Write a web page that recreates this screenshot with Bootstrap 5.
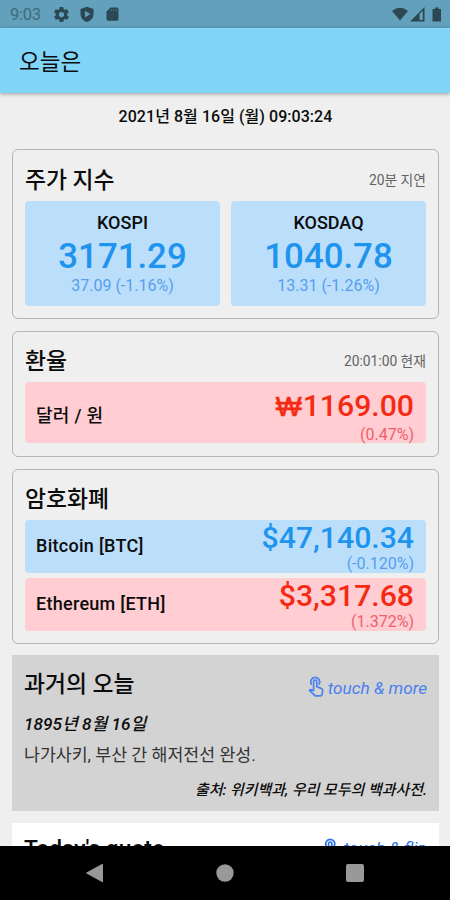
<!DOCTYPE html>
<html lang="ko">
<head>
<meta charset="utf-8">
<meta name="viewport" content="width=device-width, initial-scale=1">
<title>오늘은</title>
<link href="https://cdn.jsdelivr.net/npm/bootstrap@5.3.0/dist/css/bootstrap.min.css" rel="stylesheet">
<style>
  body { font-family: Roboto, "Noto Sans CJK KR", sans-serif; background: #efefef; color: #0c0c0c; }
  .screen { width: 450px; height: 900px; }
  .status-bar { height: 28px; background: #62a0bb; color: #2b4753; font-size: 16.5px; line-height: 28px; padding: 1px 8px 0 10px; }
  .clock { width: 44px; color: #3f6a7c; letter-spacing: -.3px; }
  .app-bar { height: 65px; background: #80d5f9; padding: 4px 19px 0; font-size: 22.5px; box-shadow: 0 1px 4px rgba(0,0,0,.35); z-index: 1; }
  .content { padding: 0 11px 0 12px; }
  .stamp { height: 56px; font-size: 16px; line-height: 47px; font-weight: 500; letter-spacing: .05px; }
  .panel { border: 1.5px solid #b5b5b5; border-radius: 6px; padding: 0 12px; margin-bottom: 12px; }
  .panel-stock { height: 170px; }
  .panel-rate { height: 126px; }
  .panel-coin { height: 175px; margin-bottom: 11px; }
  .panel-head { height: 51px; padding-top: 9px; }
  .panel-head-sm { height: 50px; padding-top: 8px; }
  .title { font-size: 22.8px; line-height: 44px; font-weight: 500; }
  .note { font-size: 13.8px; line-height: 42px; color: #626262; }
  .tile { border-radius: 4px; }
  .tile-down { background: #bbdefb; }
  .tile-up { background: #ffcdd2; }
  .down { color: #1e94ee; }
  .up { color: #f52a12; }
  .sub-down { color: #559fed; }
  .sub-up { color: #f0606a; }
  .stocks { gap: 11px; }
  .stock { height: 105px; padding-top: 10px; }
  .name { font-size: 18px; line-height: 24px; font-weight: 500; }
  .pair { letter-spacing: .28px; }
  .big { font-size: 34.8px; line-height: 43px; font-weight: 500; }
  .price { font-size: 30.2px; line-height: 36px; font-weight: 500; }
  .won { font-family: "Liberation Sans", sans-serif; font-size: 27.5px; line-height: 1; -webkit-text-stroke: .7px currentColor; margin-right: 1px; }
  .delta { font-size: 16px; line-height: 16px; }
  .tile-row { padding: 0 12px 0 11px; }
  .row-rate { height: 61px; padding-top: 6px; }
  .row-rate .delta { line-height: 22px; }
  .row-coin { height: 53px; }
  .row-coin .price { line-height: 35px; }
  .row-coin .delta { line-height: 18px; }
  .row-coin .pair { padding-bottom: 1px; }
  .row-coin + .row-coin { margin-top: 5px; }
  .history { height: 156px; background: #d3d3d3; padding: 8px 12px 0; margin-bottom: 12px; }
  .quote { height: 90px; background: #fff; padding: 4px 12px 0; }
  .hist-date { font-size: 17.2px; line-height: 24px; font-weight: 500; margin-top: 3px; }
  .hist-text { font-size: 17.3px; line-height: 24px; color: #333; margin-top: 7px; }
  .source { font-size: 14.95px; line-height: 20px; font-weight: 500; margin-top: 13px; }
  .touch { font-size: 17.2px; line-height: 42px; color: #4a80f0; padding-top: 4px; }
  .touch-flip { line-height: 28px; padding-top: 7px; color: #2f73ea; }
  .nav-keys { height: 54px; padding: 0 86px 0 85px; background: #000; }
</style>
<script src="https://cdn.jsdelivr.net/npm/bootstrap@5.3.0/dist/js/bootstrap.bundle.min.js"></script>
</head>
<body>
<svg class="d-none">
  <symbol id="tap" viewBox="0 0 16 21">
    <g fill="none" stroke="currentColor" stroke-width="1.7" stroke-linejoin="round" stroke-linecap="round">
      <path d="M3.400 8.200A4.500 4.500 0 1 1 11.200 8"/>
      <path d="M5.600 14.600V5.600a1.600 1.600 0 0 1 3.200 0v5l4.600 1.900q1.500.7 1.300 2.200l-.6 3.600q-.3 1.500-1.800 1.500H7.200L1.400 14.400l1-.8z"/>
    </g>
  </symbol>
</svg>
<div class="screen d-flex flex-column overflow-hidden">
  <div class="status-bar d-flex align-items-center flex-shrink-0">
    <span class="clock">9:03</span>
    <div class="d-flex align-items-center flex-grow-1">
      <svg width="15" height="15" viewBox="2 2 20 20" fill="currentColor"><path fill-rule="evenodd" d="M19.400 13a7.500 7.500 0 0 0 0-2l2.100-1.600a.5.5 0 0 0 .1-.6l-2-3.500a.5.5 0 0 0-.6-.2l-2.500 1a7 7 0 0 0-1.700-1l-.4-2.600a.5.5 0 0 0-.5-.5h-4a.5.5 0 0 0-.5.5L9 5.100a7 7 0 0 0-1.700 1l-2.500-1a.5.5 0 0 0-.6.2l-2 3.500a.5.5 0 0 0 .1.600L4.500 11a7.500 7.500 0 0 0 0 2l-2.100 1.600a.5.5 0 0 0-.1.600l2 3.500c.1.200.4.300.6.200l2.500-1a7 7 0 0 0 1.700 1l.4 2.600c0 .3.200.5.500.5h4c.3 0 .5-.2.500-.5l.4-2.600a7 7 0 0 0 1.700-1l2.500 1c.2.100.5 0 .6-.2l2-3.500a.5.5 0 0 0-.1-.6zM12 15.500a3.500 3.500 0 1 1 0-7 3.500 3.500 0 0 1 0 7z"/></svg>
      <svg class="ms-2" width="19" height="17" viewBox="0 0 19 17" fill="currentColor"><path fill-rule="evenodd" d="M10 .8l6.500 2.300v4.700c0 4-2.600 7-6.500 8.300C6.100 14.800 3.500 11.800 3.500 7.800V3.100zM8 4.800v6.600l5.300-3.300z"/></svg>
      <svg class="ms-2" width="19" height="17" viewBox="0 0 19 17" fill="currentColor"><path fill-rule="evenodd" d="M6.500 1.500h6.200q1.800 0 1.800 1.700v9.900q0 1.700-1.800 1.700H4.300Q2.500 14.800 2.500 13.100V5.500zM6.800 3.500v1.200h.8V3.500zm2.600 0v1.200h.8V3.500zm2.600 0v1.200h.8V3.500z"/></svg>
    </div>
    <svg width="50" height="16" viewBox="0 0 50 16" fill="currentColor">
      <path d="M0 4Q8 -2.500 16 4L8 13.500z"/>
      <path fill-rule="evenodd" d="M18 14.500L32.500 0v14.500zM27.500 7v6h3.300V3.800z"/>
      <path d="M40.500 2H43V.5h3.500V2H49v12.500h-8.500z"/>
    </svg>
  </div>
  <div class="app-bar d-flex align-items-center flex-shrink-0 position-relative">오늘은</div>
  <main class="content flex-grow-1 overflow-hidden">
    <div class="stamp text-center">2021년 8월 16일 (월) 09:03:24</div>

    <section class="panel panel-stock">
      <div class="panel-head d-flex justify-content-between"><span class="title">주가 지수</span><span class="note">20분 지연</span></div>
      <div class="stocks d-flex text-center">
        <div class="tile tile-down stock w-50">
          <div class="name">KOSPI</div><div class="big down">3171.29</div><div class="delta sub-down">37.09 (-1.16%)</div>
        </div>
        <div class="tile tile-down stock w-50">
          <div class="name">KOSDAQ</div><div class="big down">1040.78</div><div class="delta sub-down">13.31 (-1.26%)</div>
        </div>
      </div>
    </section>

    <section class="panel panel-rate">
      <div class="panel-head-sm d-flex justify-content-between"><span class="title">환율</span><span class="note">20:01:00 현재</span></div>
      <div class="tile tile-up tile-row row-rate d-flex justify-content-between">
        <span class="name pair align-self-center">달러 / 원</span>
        <div class="text-end"><div class="price up"><span class="won">₩</span>1169.00</div><div class="delta sub-up">(0.47%)</div></div>
      </div>
    </section>

    <section class="panel panel-coin">
      <div class="panel-head-sm"><span class="title">암호화폐</span></div>
      <div class="tile tile-down tile-row row-coin d-flex justify-content-between">
        <span class="name pair align-self-center">Bitcoin [BTC]</span>
        <div class="text-end"><div class="price down">$47,140.34</div><div class="delta sub-down">(-0.120%)</div></div>
      </div>
      <div class="tile tile-up tile-row row-coin d-flex justify-content-between">
        <span class="name pair align-self-center">Ethereum [ETH]</span>
        <div class="text-end"><div class="price up">$3,317.68</div><div class="delta sub-up">(1.372%)</div></div>
      </div>
    </section>

    <section class="history">
      <div class="d-flex justify-content-between">
        <span class="title">과거의 오늘</span>
        <span class="touch fst-italic d-flex align-items-center"><svg class="me-1 mb-1" width="16" height="21"><use href="#tap"/></svg>touch &amp; more</span>
      </div>
      <div class="hist-date fst-italic">1895년 8월 16일</div>
      <div class="hist-text">나가사키, 부산 간 해저전선 완성.</div>
      <div class="source fst-italic text-end">출처: 위키백과, 우리 모두의 백과사전.</div>
    </section>

    <section class="quote d-flex justify-content-between">
      <span class="title">Today's quote</span>
      <span class="touch touch-flip fst-italic d-flex align-items-start"><svg class="me-1 mt-1" width="16" height="21"><use href="#tap"/></svg><span>touch &amp; flip</span></span>
    </section>
  </main>
  <nav class="nav-keys d-flex justify-content-between align-items-center flex-shrink-0">
    <svg width="19" height="20" viewBox="0 0 19 20"><path d="M1.500 10L17.500 1.200v17.600z" fill="#999" stroke="#999" stroke-linejoin="round"/></svg>
    <svg width="18" height="18" viewBox="0 0 18 18"><circle cx="9" cy="9" r="8.700" fill="#999"/></svg>
    <svg width="18" height="18" viewBox="0 0 18 18"><rect width="18" height="18" rx="2" fill="#999"/></svg>
  </nav>
</div>
</body>
</html>
